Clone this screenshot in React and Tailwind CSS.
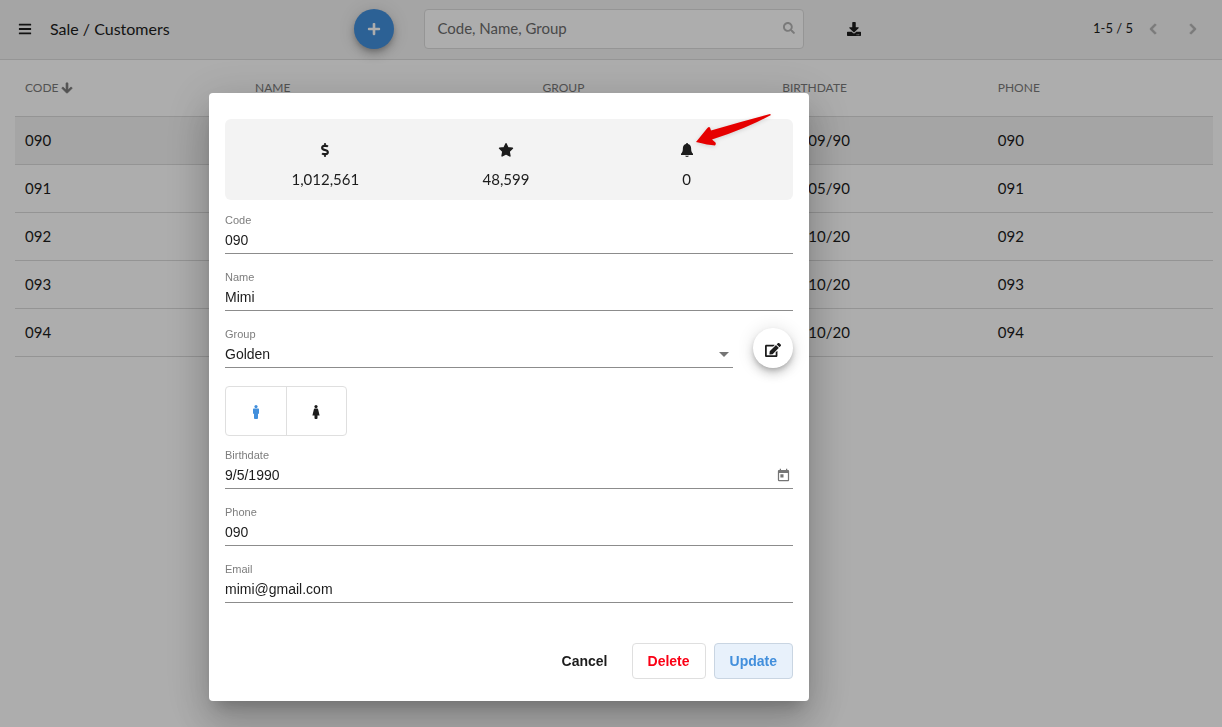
import { useState } from "react";
import {
  FaArrowDown,
  FaBars,
  FaChevronLeft,
  FaChevronRight,
  FaDollarSign,
  FaDownload,
  FaEdit,
  FaPlus,
  FaSearch,
} from "react-icons/fa";
import { MdArrowDropDown, MdToday } from "react-icons/md";

const customers = [
  { code: "090", name: "Mimi", group: "Golden", birthdate: "05/09/90", phone: "090" },
  { code: "091", name: "", group: "", birthdate: "07/05/90", phone: "091" },
  { code: "092", name: "", group: "", birthdate: "01/10/20", phone: "092" },
  { code: "093", name: "", group: "", birthdate: "01/10/20", phone: "093" },
  { code: "094", name: "", group: "", birthdate: "01/10/20", phone: "094" },
];

function BellIcon(props) {
  return (
    <svg viewBox="0 0 12 14" fill="currentColor" {...props}>
      <path d="M6 0c.6 0 1 .4 1 .9 2 .5 3.1 2.1 3.1 4.1 0 3 .5 4.4 1.9 5.7V12H0v-1.3C1.4 9.4 1.9 8 1.9 5c0-2 1.1-3.6 3.1-4.1 0-.5.4-.9 1-.9z" />
      <path d="M4.2 12.8h3.6c0 .7-.8 1.2-1.8 1.2s-1.8-.5-1.8-1.2z" />
    </svg>
  );
}

function StarIcon(props) {
  return (
    <svg viewBox="0 0 14 14" fill="currentColor" stroke="currentColor" strokeWidth="1.5" strokeLinejoin="round" overflow="visible" {...props}>
      <path d="M7 .7l1.900 4 4.500.6-3.300 3.100.8 4.500L7 10.800l-3.900 2.100.8-4.500L.6 5.300l4.500-.6z" />
    </svg>
  );
}

function ManIcon(props) {
  return (
    <svg viewBox="0 0 14 14" fill="currentColor" {...props}>
      <circle cx="7" cy="1.600" r="1.600" />
      <path d="M5 3.600h4c.6 0 1 .4 1 1v4.200H9V13c0 .6-.3 1-.9 1H5.900C5.300 14 5 13.600 5 13V8.800H4V4.600c0-.6.4-1 1-1z" />
    </svg>
  );
}

function WomanIcon(props) {
  return (
    <svg viewBox="0 0 14 14" fill="currentColor" {...props}>
      <circle cx="7" cy="1.600" r="1.600" />
      <path d="M5.700 3.600h2.600c.4 0 .7.3.8.7l1.500 6.300H8.500V13c0 .6-.3 1-.8 1H6.300c-.5 0-.8-.4-.8-1v-2.400H3.400l1.500-6.300c.1-.4.4-.7.8-.7z" />
    </svg>
  );
}

const stats = [
  { label: "Revenue", value: "1,012,561", Icon: FaDollarSign },
  { label: "Points", value: "48,599", Icon: StarIcon },
  { label: "Notifications", value: "0", Icon: BellIcon },
];

function TopBar() {
  return (
    <header className="flex h-[60px] items-center border-b border-[#dcdcdc] bg-[#f3f3f3] pb-px">
      <div className="flex w-[29%] items-center pl-[18px]">
        <button type="button" aria-label="Menu">
          <FaBars className="size-3.5" />
        </button>
        <h1 className="ml-[18px] text-base">Sale / Customers</h1>
      </div>
      <button
        type="button"
        aria-label="Add customer"
        className="flex size-10 items-center justify-center rounded-full bg-[#428fdc] text-white shadow-[0_3px_5px_-1px_rgba(0,0,0,0.2),0_6px_10px_rgba(0,0,0,0.14),0_1px_18px_rgba(0,0,0,0.12)]"
      >
        <FaPlus className="size-3.5" />
      </button>
      <label className="ml-[30px] flex h-10 w-[31.1%] items-center rounded border border-[#dcdcdc] bg-white pr-2 pb-0.5 pl-3">
        <input
          type="search"
          aria-label="Search customers"
          placeholder="Code, Name, Group"
          className="min-w-0 flex-1 text-[15px] outline-none placeholder:text-[#6c6c6c]"
        />
        <FaSearch className="size-3 text-[#b4b4b4]" />
      </label>
      <button type="button" aria-label="Download" className="ml-[43px]">
        <FaDownload className="size-3.5" />
      </button>
      <div className="ml-auto flex items-center pr-[23px]">
        <span className="text-[13px]">1-5 / 5</span>
        <button type="button" aria-label="Previous page" className="ml-3.5 text-[#b4b4b4]">
          <FaChevronLeft className="size-3" strokeWidth={30} />
        </button>
        <button type="button" aria-label="Next page" className="ml-7 text-[#b4b4b4]">
          <FaChevronRight className="size-3" strokeWidth={30} />
        </button>
      </div>
    </header>
  );
}

function CustomerTable() {
  return (
    <div className="pr-[9px] pl-[15px]">
      <table className="w-full table-fixed text-left">
        <thead>
          <tr className="h-14 text-xs text-[#7a7a7a] [&>th]:px-2.5 [&>th]:font-normal">
            <th className="w-[19.2%]">
              <span className="flex items-center">
                CODE
                <FaArrowDown className="ml-0.5 size-3" strokeWidth={30} />
              </span>
            </th>
            <th className="w-[24%]">NAME</th>
            <th className="w-[20%]">GROUP</th>
            <th className="w-[18%]">BIRTHDATE</th>
            <th>PHONE</th>
          </tr>
        </thead>
        <tbody>
          {customers.map((customer, index) => (
            <tr
              key={customer.code}
              className={`h-12 border-y border-[#dadada] text-[15px] ${index === 0 ? "bg-[#f3f3f3]" : ""}`}
            >
              <td className="px-2.5">{customer.code}</td>
              <td className="px-2.5">{customer.name}</td>
              <td className="px-2.5">{customer.group}</td>
              <td className="px-3">{customer.birthdate}</td>
              <td className="px-2.5">{customer.phone}</td>
            </tr>
          ))}
        </tbody>
      </table>
    </div>
  );
}

function Field({ id, label, value, onChange, icon }) {
  return (
    <div className="border-b border-[#8c8c8c] pb-px">
      <label htmlFor={id} className="block text-[11px] leading-4 text-[#7d7d7d]">{label}</label>
      <div className="flex h-6 items-center">
        <input id={id} className="min-w-0 flex-1 text-sm outline-none" value={value} onChange={onChange} />
        {icon}
      </div>
    </div>
  );
}

function CustomerDialog() {
  const [form, setForm] = useState({
    code: "090",
    name: "Mimi",
    group: "Golden",
    gender: "male",
    birthdate: "9/5/1990",
    phone: "090",
    email: "mimi@gmail.com",
  });

  function update(key) {
    return (event) => setForm({ ...form, [key]: event.target.value });
  }

  return (
    <form
      role="dialog"
      aria-label="Customer"
      className="relative w-[600px] max-w-full rounded bg-white px-4 pt-[26px] pb-[22px] font-['Liberation_Sans',sans-serif] shadow-[0_11px_15px_-7px_rgba(0,0,0,0.2),0_24px_38px_3px_rgba(0,0,0,0.14),0_9px_46px_8px_rgba(0,0,0,0.12)]"
      onSubmit={(event) => event.preventDefault()}
    >
      <div className="grid h-[81px] grid-cols-3 rounded-md bg-[#f3f3f3] pt-6 pr-4 pl-2.5 font-[Lato,sans-serif]">
        {stats.map(({ label, value, Icon }) => (
          <div key={label} className="flex flex-col items-center gap-3">
            <Icon className="size-3.5" aria-label={label} />
            <span className="text-[15px] leading-5">{value}</span>
          </div>
        ))}
      </div>

      <div className="mt-3 flex flex-col gap-[15px]">
        <Field id="code" label="Code" value={form.code} onChange={update("code")} />
        <Field id="name" label="Name" value={form.name} onChange={update("name")} />
        <div className="flex items-end gap-5">
          <div className="flex-1 border-b border-[#8c8c8c] pb-px">
            <label htmlFor="group" className="block text-[11px] leading-4 text-[#7d7d7d]">Group</label>
            <div className="relative flex h-6 items-center">
              <select
                id="group"
                className="w-full appearance-none text-sm outline-none"
                value={form.group}
                onChange={update("group")}
              >
                <option>Golden</option>
                <option>Silver</option>
              </select>
              <MdArrowDropDown className="pointer-events-none absolute -right-[3px] size-6 text-[#757575]" />
            </div>
          </div>
          <button
            type="button"
            aria-label="Edit groups"
            className="flex size-10 items-center justify-center rounded-full pt-1 shadow-[0_3px_5px_-1px_rgba(0,0,0,0.2),0_6px_10px_rgba(0,0,0,0.14),0_1px_18px_rgba(0,0,0,0.12)]"
          >
            <FaEdit className="size-4" />
          </button>
        </div>
        <div role="radiogroup" aria-label="Gender" className="mt-[3px] -mb-1 flex h-[50px] w-[122px] rounded border border-[#dfdfdf]">
          <label className="flex flex-1 items-center justify-center border-r border-[#dfdfdf] pt-0.5 has-checked:text-[#428fdc]">
            <input
              type="radio"
              name="gender"
              value="male"
              aria-label="Male"
              className="sr-only"
              checked={form.gender === "male"}
              onChange={update("gender")}
            />
            <ManIcon className="size-3.5" />
          </label>
          <label className="flex flex-1 items-center justify-center pt-0.5 has-checked:text-[#428fdc]">
            <input
              type="radio"
              name="gender"
              value="female"
              aria-label="Female"
              className="sr-only"
              checked={form.gender === "female"}
              onChange={update("gender")}
            />
            <WomanIcon className="size-3.5" />
          </label>
        </div>
        <Field
          id="birthdate"
          label="Birthdate"
          value={form.birthdate}
          onChange={update("birthdate")}
          icon={<MdToday className="mr-0.5 size-[15px] text-[#757575]" />}
        />
        <Field id="phone" label="Phone" value={form.phone} onChange={update("phone")} />
        <Field id="email" label="Email" value={form.email} onChange={update("email")} />
      </div>

      <div className="mt-10 flex h-9 justify-end gap-2 text-sm font-bold">
        <button type="button" className="px-4">Cancel</button>
        <button type="button" className="rounded border border-[#dfdfdf] px-[15px] text-[#fb0015]">Delete</button>
        <button type="submit" className="rounded border border-[#c9d5e2] bg-[#e8f1fb] px-[15px] text-[#428fdc]">Update</button>
      </div>

      <svg className="absolute top-5 left-[486px] h-9 w-[77px] drop-shadow-sm" viewBox="0 0 77 36" aria-hidden="true">
        <path
          d="M75 1Q45 9 16 17.5L15 14.5Q13.500 13 12 15.500L1 29Q13 32 20 32.500Q21.500 31 20.500 29.500L17 26.500Q50 16 76 2Z"
          fill="#e60000"
        />
      </svg>
    </form>
  );
}

export default function App() {
  return (
    <div className="min-h-screen bg-white font-[Lato,sans-serif] text-[#1c1c1c]">
      <TopBar />
      <CustomerTable />
      <div className="fixed inset-0 flex items-center justify-center bg-black/32 pt-[67px] pr-[204px]">
        <CustomerDialog />
      </div>
    </div>
  );
}
